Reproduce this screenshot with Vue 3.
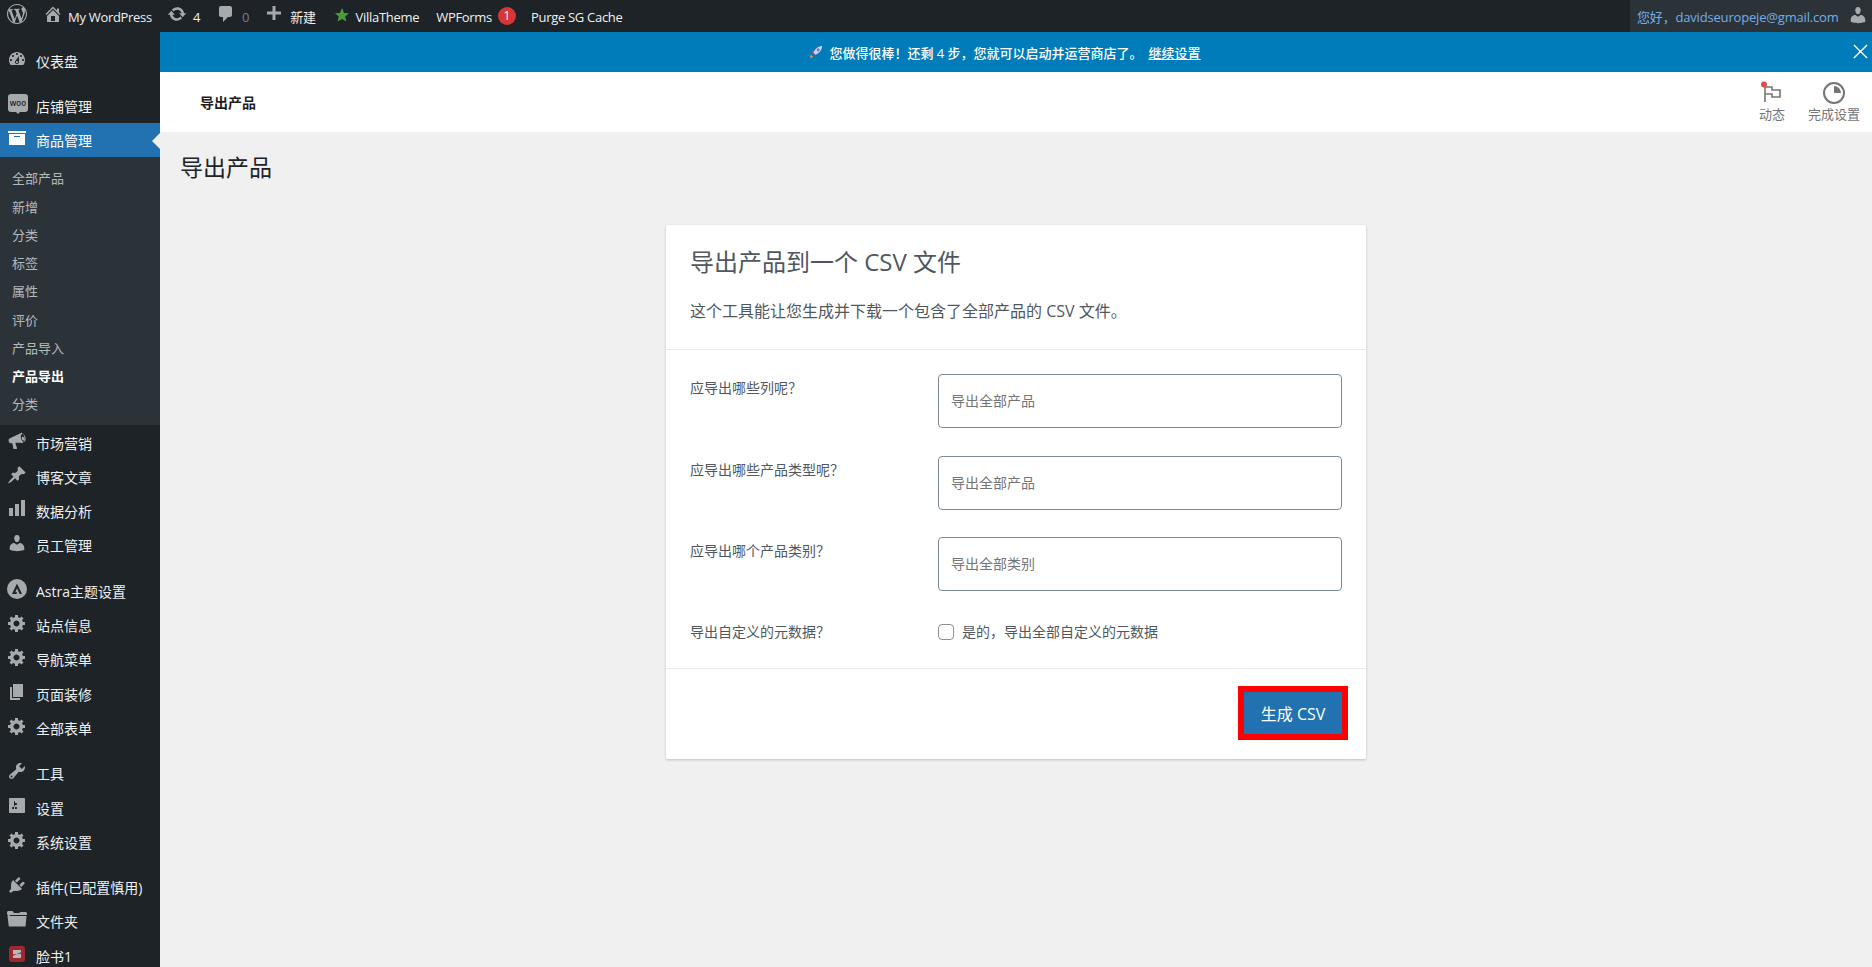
<template>
  <div class="page">
    <!-- 顶部工具栏 -->
    <header class="topbar">
      <svg class="tb-icon tb-logo" viewBox="0 0 20 20"><path :d="icons.wp" /></svg>
      <svg class="tb-icon tb-home" viewBox="0 0 20 20"><path :d="icons.home" /></svg>
      <span class="tb-text">My WordPress</span>
      <svg class="tb-icon tb-update" viewBox="0 0 20 20"><path :d="icons.update" /></svg>
      <span class="tb-text">4</span>
      <svg class="tb-icon tb-comment" viewBox="0 0 20 20"><path :d="icons.comment" /></svg>
      <span class="tb-text tb-dim">0</span>
      <svg class="tb-icon tb-plus" viewBox="0 0 20 20"><path :d="icons.plus" /></svg>
      <span class="tb-text">新建</span>
      <svg class="tb-star" viewBox="0 0 20 20"><polygon points="10,0 13,7 20,7.6 14.6,12.2 16.3,19.4 10,15.6 3.7,19.4 5.4,12.2 0,7.6 7,7" /></svg>
      <span class="tb-text tb-villa">VillaTheme</span>
      <span class="tb-text tb-forms">WPForms</span>
      <span class="tb-badge">1</span>
      <span class="tb-text tb-purge">Purge SG Cache</span>
      <div class="tb-account">
        <span class="tb-hello">您好，davidseuropeje@gmail.com</span>
        <svg class="tb-icon tb-avatar" viewBox="0 0 20 20"><path :d="icons.user" /></svg>
      </div>
    </header>

    <div class="body">
      <!-- 左侧菜单 -->
      <aside class="sidebar">
        <template v-for="item in menu" :key="item.name">
          <div class="menu-row" :class="{ sep: item.sep, active: item.active }">
            <span v-if="item.icon === 'woo'" class="woo-icon"><span>woo</span></span>
            <svg v-else-if="item.icon === 'astra'" class="menu-icon" viewBox="0 0 20 20">
              <circle cx="10" cy="10" r="10" />
              <path class="cut" d="M10 4.5 15 15h-2.4L10 9.3 8.3 13.2h1.9L9.5 15H5z" />
            </svg>
            <svg v-else-if="item.icon === 'zap'" class="menu-icon" viewBox="0 0 20 20">
              <rect class="zap-bg" x="2" y="2" width="16" height="16" rx="3" />
              <path class="zap-mark" d="M6 6h8v2.2l-4.2 1.6H14V14H6v-2.2l4.2-1.6H6z" />
            </svg>
            <svg v-else class="menu-icon" viewBox="0 0 20 20"><path :d="icons[item.icon]" /></svg>
            <span class="menu-name">{{ item.name }}</span>
          </div>
          <nav v-if="item.active" class="submenu">
            <a v-for="sub in subItems" :key="sub.key" class="sub-row" :class="{ current: sub.current }">{{ sub.name }}</a>
          </nav>
        </template>
      </aside>

      <main class="main">
        <div class="banner">
          <svg class="rocket" viewBox="0 0 16 16">
            <path fill="#f0902e" d="M1 15l1.2-4 2.8 2.8z" />
            <path fill="#dc3a52" d="M2.800 7.400 6.400 5.800 5 10.200zM8.600 10.400l1.600-3.600L5.800 11z" />
            <path fill="#d9cdeb" d="M15 1c-4.500.2-8 3-10 7.600l2.400 2.400C12 9 14.800 5.500 15 1z" />
            <circle cx="10.500" cy="5.500" r="1.800" fill="#5f86d6" />
          </svg>
          <span class="banner-text">您做得很棒！还剩 4 步，您就可以启动并运营商店了。</span>
          <a class="banner-link">继续设置</a>
          <svg class="banner-close" viewBox="0 0 16 16"><path d="M1 1l14 14M15 1 1 15" /></svg>
        </div>

        <div class="head">
          <span class="head-title">导出产品</span>
          <div class="head-actions">
            <div class="head-action">
              <svg viewBox="0 0 24 24">
                <path class="flag" d="M5 21V6h7v3h8v7h-8v-3H5" />
                <circle cx="4" cy="3.500" r="3" fill="#dc4c4c" />
              </svg>
              <span>动态</span>
            </div>
            <div class="head-action">
              <svg viewBox="0 0 24 24">
                <circle class="ring" cx="12" cy="12" r="10" />
                <path fill="#757575" d="M12 5a7 7 0 0 1 7 7h-7z" />
              </svg>
              <span>完成设置</span>
            </div>
          </div>
        </div>

        <h1 class="page-title">导出产品</h1>

        <section class="card">
          <div class="card-top">
            <h2 class="card-title">导出产品到一个 CSV 文件</h2>
            <p class="card-desc">这个工具能让您生成并下载一个包含了全部产品的 CSV 文件。</p>
          </div>
          <div class="card-form">
            <div v-for="row in fields" :key="row.label" class="form-row">
              <label class="form-label">{{ row.label }}</label>
              <div class="field">{{ row.value }}</div>
            </div>
            <div class="form-row check-row">
              <label class="form-label">导出自定义的元数据？</label>
              <label class="check">
                <input type="checkbox" />
                <span>是的，导出全部自定义的元数据</span>
              </label>
            </div>
          </div>
          <div class="card-foot">
            <span class="mark"><button class="primary" type="button">生成 CSV</button></span>
          </div>
        </section>
      </main>
    </div>
  </div>
</template>

<script setup>
const icons = {
  wp: 'M20 10c0-5.51-4.49-10-10-10C4.48 0 0 4.49 0 10c0 5.52 4.48 10 10 10 5.51 0 10-4.48 10-10zM7.78 15.37L4.37 6.22c.55-.02 1.17-.08 1.17-.08.5-.06.44-1.13-.06-1.11 0 0-1.45.11-2.37.11-.18 0-.37 0-.58-.01C4.12 2.69 6.87 1.11 10 1.11c2.33 0 4.45.87 6.05 2.34-.68-.11-1.65.39-1.65 1.58 0 .74.45 1.36.9 2.1.35.61.55 1.36.55 2.46 0 1.49-1.4 5-1.4 5l-3.03-8.37c.54-.02.82-.17.82-.17.5-.05.44-1.25-.06-1.22 0 0-1.44.12-2.38.12-.87 0-2.33-.12-2.33-.12-.5-.03-.56 1.2-.06 1.22l.92.08 1.26 3.41zM17.41 10c.24-.64.74-1.87.43-4.25.7 1.29 1.05 2.71 1.05 4.25 0 3.29-1.73 6.24-4.4 7.78.97-2.59 1.94-5.2 2.92-7.78zM6.1 18.09C3.12 16.65 1.11 13.53 1.11 10c0-1.3.23-2.48.72-3.59C3.25 10.3 4.67 14.2 6.1 18.09zm4.03-6.63l2.58 6.98c-.86.29-1.76.45-2.71.45-.79 0-1.57-.11-2.29-.33.81-2.38 1.62-4.74 2.42-7.1z',
  home: 'M16 8.5l1.53 1.53-1.06 1.06L10 4.62l-6.47 6.47-1.06-1.06L10 2.5l4 4v-2h2v4zm-6-2.46l6 5.99V18H4v-5.97zM12 17v-5H8v5h4z',
  update: 'M10.2 3.28c3.53 0 6.43 2.61 6.92 6h2.08l-3.5 4-3.5-4h2.32c-.45-1.97-2.21-3.45-4.32-3.45-1.45 0-2.73.71-3.54 1.78L4.95 5.66C6.23 4.2 8.11 3.28 10.2 3.28zm-.4 13.44c-3.52 0-6.43-2.61-6.92-6H.8l3.5-4c1.17 1.33 2.33 2.67 3.5 4H5.48c.45 1.97 2.21 3.45 4.32 3.45 1.45 0 2.73-.71 3.54-1.78l1.71 1.95c-1.28 1.46-3.15 2.38-5.25 2.38z',
  comment: 'M5 2h9c1.1 0 2 .9 2 2v7c0 1.1-.9 2-2 2h-2l-5 5v-5H5c-1.1 0-2-.9-2-2V4c0-1.1.9-2 2-2z',
  plus: 'M17 7.500v3h-5.500V16h-3v-5.500H3v-3h5.500V2h3v5.500z',
  user: 'M10 9.25c-2.27 0-2.73-3.44-2.73-3.44C7 4.02 7.82 2 9.97 2c2.16 0 2.98 2.02 2.71 3.81 0 0-.41 3.44-2.68 3.44zm0 2.57L12.72 10c2.39 0 4.52 2.33 4.52 4.53v2.49s-3.65 1.13-7.24 1.13c-3.65 0-7.24-1.13-7.24-1.13v-2.49c0-2.25 1.94-4.48 4.47-4.48z',
  dashboard: 'M3.76 16h12.48c1.1-1.37 1.76-3.11 1.76-5 0-4.42-3.58-8-8-8s-8 3.58-8 8c0 1.89.66 3.63 1.76 5zM10 4c.55 0 1 .45 1 1s-.45 1-1 1-1-.45-1-1 .45-1 1-1zM6 6c.55 0 1 .45 1 1s-.45 1-1 1-1-.45-1-1 .45-1 1-1zm8 0c.55 0 1 .45 1 1s-.45 1-1 1-1-.45-1-1 .45-1 1-1zm-5.37 5.55L12 7v6c0 1.1-.9 2-2 2s-2-.9-2-2c0-.57.24-1.08.63-1.45zM4 10c.55 0 1 .45 1 1s-.45 1-1 1-1-.45-1-1 .45-1 1-1zm12 0c.55 0 1 .45 1 1s-.45 1-1 1-1-.45-1-1 .45-1 1-1zm-5 3c0-.55-.45-1-1-1s-1 .45-1 1 .45 1 1 1 1-.45 1-1z',
  archive: 'M19 3v2H1V3h18zM2 6h16v11H2V6zm11 3V8H7v1h6z',
  megaphone: 'M15.500 1.500c-.6 0-1.100.2-1.500.5L3.500 7c-1.500.4-2.200 1.600-1.800 3.200.4 1.500 1.500 2.300 3.100 2.100l.6-.1.900 5.300c.1.300.3.500.6.500h2.600c.4 0 .6-.3.5-.7l-1.700-5.500h5.200c.5.300 1 .4 1.600.3 2-.5 3-3.300 2.200-6.300-.7-2.600-2.300-4.400-3.800-4.300zm.3 1.600c1 .1 2.100 1.400 2.600 3.200.6 2.200 0 4.200-1.200 4.500-1.200.3-2.600-1.100-3.200-3.300-.6-2.200 0-4.100 1.200-4.400.2 0 .4-.1.600 0zm-.3 2.600c-.7.200-1 1.200-.7 2.200.3 1 1.100 1.700 1.800 1.500.7-.2 1-1.200.7-2.200-.3-1-1.100-1.700-1.800-1.500z',
  pin: 'M10.440 3.020l1.820-1.820 6.360 6.350-1.830 1.820c-1.050-.68-2.480-.57-3.410.36l-.75.75c-.92.93-1.040 2.350-.35 3.410l-1.830 1.820-2.410-2.410-2.800 2.790c-.42.42-3.380 2.710-3.800 2.290s1.860-3.390 2.280-3.810l2.790-2.790L4.100 9.360l1.830-1.820c1.050.69 2.480.57 3.400-.36l.75-.75c.93-.92 1.050-2.350.36-3.410z',
  chart: 'M18 1v16h-4V1h4zm-6 4v12H8V5h4zm-6 4v8H2V9h4z',
  gear: 'M18 12h-2.180c-.17.7-.44 1.350-.81 1.930l1.540 1.540-2.100 2.100-1.540-1.540c-.58.36-1.230.63-1.910.79V19H8v-2.180c-.68-.16-1.330-.43-1.910-.79l-1.540 1.540-2.120-2.120 1.540-1.540c-.36-.58-.63-1.230-.79-1.910H1V9.030h2.170c.16-.7.44-1.350.8-1.940L2.430 5.550l2.100-2.100 1.540 1.540c.58-.37 1.240-.64 1.930-.81V2h3v2.180c.68.16 1.330.43 1.910.79l1.540-1.540 2.120 2.120-1.540 1.540c.36.59.64 1.240.8 1.940H18V12zm-8.500 1.500c1.660 0 3-1.340 3-3s-1.340-3-3-3-3 1.340-3 3 1.340 3 3 3z',
  page: 'M6 15V2h10v13H6zm-1 1h8v2H3V5h2v11z',
  tools: 'M16.680 9.770c-1.340 1.340-3.300 1.670-4.950.99l-5.410 6.520c-.99.99-2.590.99-3.580 0s-.99-2.590 0-3.570l6.520-5.420c-.68-1.650-.35-3.610.99-4.950 1.280-1.280 3.120-1.620 4.720-1.060l-2.890 2.890 2.820 2.820 2.860-2.870c.53 1.580.18 3.390-1.080 4.650zM3.810 16.210c.4.39 1.040.39 1.430 0 .4-.4.4-1.040 0-1.430-.39-.4-1.030-.4-1.430 0-.39.39-.39 1.030 0 1.430z',
  sliders: 'M18 16V3c0-.55-.45-1-1-1H3c-.55 0-1 .45-1 1v13c0 .55.45 1 1 1h14c.55 0 1-.45 1-1zM8 11h1c.55 0 1 .45 1 1s-.45 1-1 1H8v1.500c0 .28-.22.5-.5.5s-.5-.22-.5-.5V13H6c-.55 0-1-.45-1-1s.45-1 1-1h1V5.500c0-.28.22-.5.5-.5s.5.22.5.5V7h1c.55 0 1 .45 1 1s-.45 1-1 1h-1v5.500c0 .28-.22.5-.5.5s-.5-.22-.5-.5V9z',
  plugin: 'M13.110 4.360L9.870 7.600 8 5.730l3.240-3.240c.35-.34 1.050-.2 1.560.32.52.51.66 1.210.31 1.550zm-8 1.770l.91-1.120 9.010 9.010-1.190.84c-.71.71-2.630 1.160-3.820 1.160H6.140L4.900 17.260c-.59.59-1.540.59-2.120 0-.59-.58-.59-1.530 0-2.120l1.240-1.240v-3.880c0-1.130.4-3.190 1.090-3.890zm7.260 3.970l3.240-3.240c.34-.35 1.040-.21 1.550.31.52.51.66 1.210.31 1.550l-3.240 3.250z',
  folder: 'M0 5V3.500C0 2.700.6 2 1.500 2h4l1.500 2h5.500L13 3h5.500c.8 0 1.500.7 1.500 1.500V6H2.500L2.800 7H1zM.5 7h19l-1 10.500H1.800z'
}

const menu = [
  { name: '仪表盘', icon: 'dashboard' },
  { name: '店铺管理', icon: 'woo', sep: true },
  { name: '商品管理', icon: 'archive', active: true },
  { name: '市场营销', icon: 'megaphone' },
  { name: '博客文章', icon: 'pin' },
  { name: '数据分析', icon: 'chart' },
  { name: '员工管理', icon: 'user' },
  { name: 'Astra主题设置', icon: 'astra', sep: true },
  { name: '站点信息', icon: 'gear' },
  { name: '导航菜单', icon: 'gear' },
  { name: '页面装修', icon: 'page' },
  { name: '全部表单', icon: 'gear' },
  { name: '工具', icon: 'tools', sep: true },
  { name: '设置', icon: 'sliders' },
  { name: '系统设置', icon: 'gear' },
  { name: '插件(已配置慎用)', icon: 'plugin', sep: true },
  { name: '文件夹', icon: 'folder' },
  { name: '脸书1', icon: 'zap' }
]

const subItems = [
  { key: 'all', name: '全部产品' },
  { key: 'new', name: '新增' },
  { key: 'cat', name: '分类' },
  { key: 'tag', name: '标签' },
  { key: 'attr', name: '属性' },
  { key: 'review', name: '评价' },
  { key: 'import', name: '产品导入' },
  { key: 'export', name: '产品导出', current: true },
  { key: 'cat2', name: '分类' }
]

const fields = [
  { label: '应导出哪些列呢？', value: '导出全部产品' },
  { label: '应导出哪些产品类型呢？', value: '导出全部产品' },
  { label: '应导出哪个产品类别？', value: '导出全部类别' }
]
</script>

<style>
html, body {
  margin: 0;
  background: #f0f0f1;
}
</style>

<style scoped>
.page {
  width: 1872px;
  height: 967px;
  overflow: hidden;
  display: flex;
  flex-direction: column;
  background: #f0f0f1;
  font-family: "Open Sans", "Noto Sans CJK SC", sans-serif;
  color: #50575e;
}

.topbar {
  flex: none;
  height: 32px;
  display: flex;
  align-items: center;
  background: #1d2327;
  color: #f0f0f1;
  font-size: 13px;
  line-height: 22px;
}
.tb-icon {
  flex: none;
  width: 20px;
  height: 20px;
  fill: #a7aaad;
  margin-top: -5px;
  margin-right: 5px;
}
.tb-logo { margin-left: 7px; margin-right: 0; margin-top: -4px; }
.tb-home { margin-left: 16px; }
.tb-update { margin-left: 15px; margin-right: 6px; }
.tb-comment { margin-left: 16px; margin-right: 6px; }
.tb-plus { margin-left: 15px; margin-right: 6px; }
.tb-text { white-space: nowrap; margin-top: 2px; letter-spacing: -0.3px; }
.tb-dim { color: #787c82; }
.tb-star {
  flex: none;
  width: 14px;
  height: 14px;
  fill: #4a9b3c;
  margin: -3px 7px 0 19px;
}
.tb-forms { margin-left: 17px; }
.tb-badge {
  flex: none;
  width: 18px;
  height: 18px;
  margin: -1px 0 0 6px;
  border-radius: 50%;
  background: #d63638;
  color: #fff;
  font-size: 12px;
  line-height: 18px;
  text-align: center;
}
.tb-purge { margin-left: 15px; }
.tb-account {
  margin-left: auto;
  width: 242px;
  height: 32px;
  box-sizing: border-box;
  display: flex;
  align-items: center;
  padding-left: 7px;
  background: #2c3338;
}
.tb-hello {
  color: #72aee6;
  font-size: 13px;
  letter-spacing: -0.18px;
  white-space: nowrap;
  margin-top: 2px;
}
.tb-avatar { margin: -3px 0 0 9px; }

.body {
  flex: 1;
  min-height: 0;
  display: flex;
}

.sidebar {
  flex: 0 0 160px;
  box-sizing: border-box;
  padding-top: 11.500px;
  background: #1d2327;
  color: #f0f0f1;
}
.menu-row {
  position: relative;
  height: 34.3px;
  display: flex;
  align-items: center;
  font-size: 14px;
  white-space: nowrap;
}
.menu-row.sep { margin-top: 11px; }
.menu-row.active {
  background: #2271b1;
  color: #fff;
}
.menu-row.active::after {
  content: "";
  position: absolute;
  right: 0;
  top: 10px;
  border: 8px solid transparent;
  border-left: 0;
  border-right-color: #f0f0f1;
}
.menu-icon {
  flex: none;
  width: 20px;
  height: 20px;
  margin: -4px 9px 0 7px;
  fill: #a7aaad;
}
.menu-row.active .menu-icon { fill: #fff; }
.cut { fill: #1d2327; }
.zap-bg { fill: #9b2a30; }
.zap-mark { fill: #b9b6b7; }
.woo-icon {
  position: relative;
  flex: none;
  box-sizing: border-box;
  width: 20px;
  height: 18px;
  margin: -6px 8px 0 8px;
  border-radius: 3px;
  background: #a7aaad;
  color: #1d2327;
  font-size: 8px;
  font-weight: 600;
  line-height: 17px;
  text-align: center;
}
.woo-icon::after {
  content: "";
  position: absolute;
  left: 8px;
  bottom: -2px;
  border: 2px solid transparent;
  border-bottom: 0;
  border-top-color: #a7aaad;
}

.submenu {
  box-sizing: border-box;
  height: 268px;
  padding-top: 7px;
  background: #2c3338;
}
.sub-row {
  display: block;
  height: 28.25px;
  padding-left: 12px;
  color: rgba(240, 246, 252, 0.7);
  font-size: 13px;
  line-height: 28.25px;
}
.sub-row.current {
  color: #fff;
  font-weight: 600;
}

.main {
  flex: 1;
  min-width: 0;
  display: flex;
  flex-direction: column;
  align-items: stretch;
}

.banner {
  position: relative;
  flex: 0 0 40px;
  display: flex;
  align-items: center;
  justify-content: center;
  box-sizing: border-box;
  padding-right: 22px;
  background: #007cba;
  color: #fff;
  font-size: 13px;
  font-weight: 500;
}
.rocket {
  width: 14px;
  height: 14px;
  margin-right: 6px;
}
.banner-link {
  margin-left: 6px;
  text-decoration: underline;
}
.banner-close {
  position: absolute;
  right: 4px;
  top: 12px;
  width: 15px;
  height: 15px;
  fill: none;
  stroke: #fff;
  stroke-width: 1.500;
}

.head {
  flex: 0 0 60px;
  display: flex;
  align-items: flex-start;
  justify-content: space-between;
  box-sizing: border-box;
  padding: 9px 12px 0 40px;
  background: #fff;
}
.head-title {
  margin-top: 11px;
  color: #1e1e1e;
  font-size: 14px;
  font-weight: 600;
  line-height: 22px;
}
.head-actions {
  display: flex;
  gap: 23px;
}
.head-action {
  display: flex;
  flex-direction: column;
  align-items: center;
  color: #757575;
  font-size: 13px;
  line-height: 18px;
}
.head-action svg {
  width: 24px;
  height: 24px;
}
.flag {
  fill: none;
  stroke: #757575;
  stroke-width: 1.600;
}
.ring {
  fill: none;
  stroke: #757575;
  stroke-width: 2;
}

.page-title {
  margin: 20px 0 0 20px;
  color: #1d2327;
  font-size: 23px;
  font-weight: 400;
  line-height: 30px;
}

.card {
  width: 700px;
  height: 534px;
  margin: 43px auto 0;
  display: flex;
  flex-direction: column;
  box-sizing: border-box;
  border-radius: 2px;
  background: #fff;
  box-shadow: 0 1px 3px rgba(0, 0, 0, 0.2);
}
.card-top {
  flex: 0 0 125px;
  box-sizing: border-box;
  padding: 21px 24px 0;
  border-bottom: 1px solid #eaeaea;
}
.card-title {
  margin: 0;
  color: #50575e;
  font-size: 24px;
  font-weight: 400;
  line-height: 32px;
}
.card-desc {
  margin: 21px 0 0;
  font-size: 16px;
  line-height: 24px;
}
.card-form {
  flex: 1;
  padding: 24px 24px 0;
  display: flex;
  flex-direction: column;
  gap: 27.500px;
}
.form-row {
  display: flex;
  align-items: flex-start;
}
.form-label {
  flex: 0 0 248px;
  padding-top: 3px;
  font-size: 14px;
  line-height: 22px;
}
.field {
  flex: 1;
  box-sizing: border-box;
  height: 54px;
  padding: 0 12px;
  border: 1px solid #7e8993;
  border-radius: 4px;
  color: #757575;
  font-size: 14px;
  line-height: 52px;
}
.check-row { padding-top: 2px; }
.check-row .form-label { padding-top: 0; }
.check {
  display: flex;
  align-items: center;
  gap: 8px;
  font-size: 14px;
  line-height: 22px;
}
.check input {
  appearance: none;
  width: 16px;
  height: 16px;
  margin: 0;
  border: 1px solid #8c8f94;
  border-radius: 4px;
  background: #fff;
}

.card-foot {
  flex: 0 0 91px;
  box-sizing: border-box;
  display: flex;
  justify-content: flex-end;
  align-items: flex-start;
  padding: 23px 24px 0;
  border-top: 1px solid #eaeaea;
}
.mark {
  display: block;
  margin: -6px -6px 0 0;
  border: 6px solid #f00;
}
.primary {
  display: block;
  width: 98px;
  height: 42px;
  padding: 0;
  border: 0;
  background: #2271b1;
  color: #fff;
  font-family: inherit;
  font-size: 16px;
}
</style>
